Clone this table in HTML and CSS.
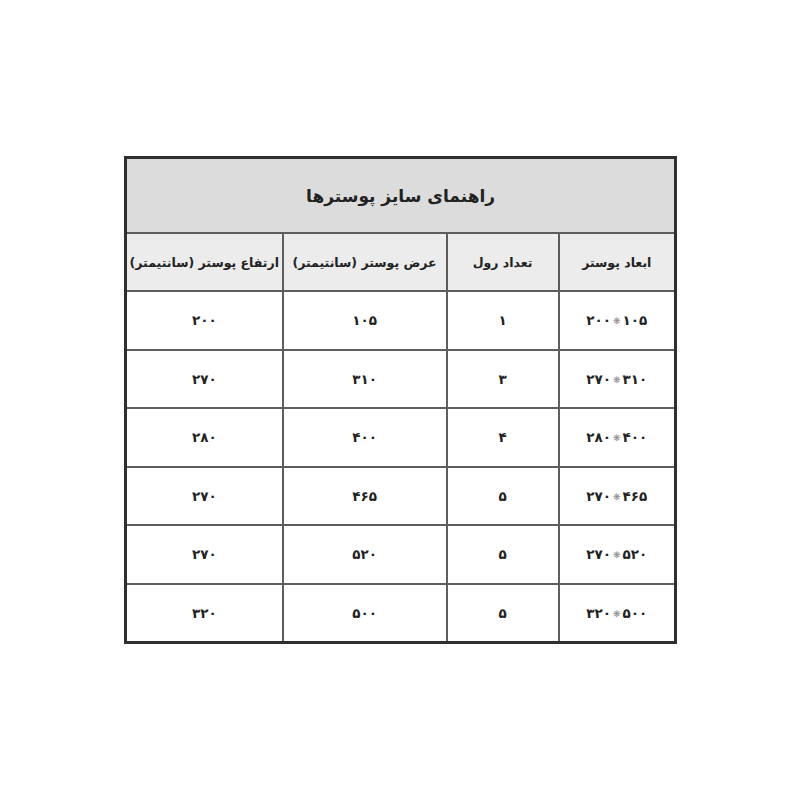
FILE: index.html
```html
<!DOCTYPE html>
<html lang="fa" dir="rtl">
<head>
<meta charset="utf-8">
<link rel="stylesheet" href="styles.css">
</head>
<body>
<table class="guide">
  <colgroup>
    <col class="c1"><col class="c2"><col class="c3"><col class="c4">
  </colgroup>
  <thead>
    <tr class="title"><th colspan="4">راهنمای سایز پوسترها</th></tr>
    <tr class="head">
      <th>ابعاد پوستر</th>
      <th>تعداد رول</th>
      <th>عرض پوستر (سانتیمتر)</th>
      <th>ارتفاع پوستر (سانتیمتر)</th>
    </tr>
  </thead>
  <tbody>
    <tr><td>۱۰۵<span class="x">❋</span>۲۰۰</td><td>۱</td><td>۱۰۵</td><td>۲۰۰</td></tr>
    <tr><td>۳۱۰<span class="x">❋</span>۲۷۰</td><td>۳</td><td>۳۱۰</td><td>۲۷۰</td></tr>
    <tr><td>۴۰۰<span class="x">❋</span>۲۸۰</td><td>۴</td><td>۴۰۰</td><td>۲۸۰</td></tr>
    <tr><td>۴۶۵<span class="x">❋</span>۲۷۰</td><td>۵</td><td>۴۶۵</td><td>۲۷۰</td></tr>
    <tr><td>۵۲۰<span class="x">❋</span>۲۷۰</td><td>۵</td><td>۵۲۰</td><td>۲۷۰</td></tr>
    <tr><td>۵۰۰<span class="x">❋</span>۳۲۰</td><td>۵</td><td>۵۰۰</td><td>۳۲۰</td></tr>
  </tbody>
</table>
</body>
</html>
```
FILE: styles.css
```css
html, body {
  margin: 0;
  padding: 0;
  background: #ffffff;
}
body {
  font-family: "DejaVu Sans", sans-serif;
  color: #222;
  padding-top: 156px;
}
.guide {
  direction: rtl;
  margin: 0 auto 0 124px;
  width: 552px;
  border-collapse: collapse;
  table-layout: fixed;
  border: 3px solid #2f2f2f;
}
.c1 { width: 117px; }
.c2 { width: 112px; }
.c3 { width: 164px; }
.c4 { width: 157px; }
.guide th, .guide td {
  border: 2px solid #5e5e5e;
  text-align: center;
  vertical-align: middle;
  padding: 0;
  white-space: nowrap;
}
.title th {
  background: #dcdcdc;
  height: 73px;
  font-size: 17px;
  font-weight: bold;
}
.head th {
  background: #ececec;
  height: 56px;
  font-size: 12.5px;
  font-weight: bold;
}
.guide td {
  height: 56.5px;
  font-size: 13.5px;
  font-weight: bold;
  background: #fff;
}
.x {
  font-size: 9px;
  color: #8a8a8a;
  margin: 0 2px;
  vertical-align: 1px;
}
```
